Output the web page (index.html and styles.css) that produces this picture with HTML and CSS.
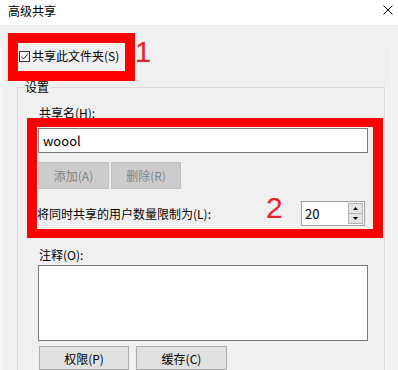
FILE: index.html
```html
<!DOCTYPE html>
<html lang="zh-CN">
<head>
<meta charset="utf-8">
<title>高级共享</title>
<link rel="stylesheet" href="styles.css">
</head>
<body>
<div class="dialog">
  <div class="titlebar">
    <span class="title">高级共享</span>
    <svg class="close" width="10" height="10" viewBox="0 0 10 10"><path d="M0.5 0.5 L9.5 9.5 M9.5 0.5 L0.5 9.5" stroke="#111" stroke-width="1" fill="none"/></svg>
  </div>
  <div class="body">
    <div class="share-row">
      <span class="checkbox"><svg width="9" height="9" viewBox="0 0 9 9"><path d="M1 4.5 L3.5 7 L8 1.5" stroke="#222" stroke-width="1" fill="none"/></svg></span>
      <span class="label">共享此文件夹(S)</span>
    </div>
    <fieldset class="group">
      <legend class="legend">设置</legend>
      <div class="label name-label">共享名(H):</div>
      <div class="textbox">woool</div>
      <div class="btn-row">
        <span class="btn disabled w71">添加(A)</span>
        <span class="btn disabled w70">删除(R)</span>
      </div>
      <div class="limit-row">
        <span class="label">将同时共享的用户数量限制为(L):</span>
        <span class="spin">
          <span class="spin-value">20</span>
          <span class="spin-btns">
            <span class="spin-btn"><svg width="5" height="3" viewBox="0 0 5 3"><path d="M0 3 L2.5 0 L5 3 Z" fill="#000"/></svg></span>
            <span class="spin-btn"><svg width="5" height="3" viewBox="0 0 5 3"><path d="M0 0 L2.5 3 L5 0 Z" fill="#000"/></svg></span>
          </span>
        </span>
      </div>
      <div class="label note-label">注释(O):</div>
      <div class="textarea"></div>
      <div class="btn-row bottom">
        <span class="btn normal w90">权限(P)</span>
        <span class="btn normal w91">缓存(C)</span>
      </div>
    </fieldset>
  </div>
  <div class="mark mark1"></div>
  <div class="num num1">1</div>
  <div class="mark mark2"></div>
  <div class="num num2">2</div>
</div>
</body>
</html>
```
FILE: styles.css
```css
html, body {
  margin: 0;
  padding: 0;
  background: #f0f0f0;
}
.dialog {
  position: relative;
  width: 398px;
  height: 370px;
  overflow: hidden;
  background: #f0f0f0;
  font-family: "Noto Sans CJK SC", "Liberation Sans", sans-serif;
  font-size: 12px;
  color: #000;
}
.titlebar {
  height: 25px;
  background: #fff;
  display: flex;
  align-items: center;
  justify-content: space-between;
  padding: 0 5px 4px 8px;
  box-sizing: border-box;
}
.title {
  line-height: 16px;
}
.close {
  display: block;
  margin-top: -1px;
}
.body {
  height: 345px;
  border-left: 3px solid #f6f6f6;
  border-right: 1px solid #f6f6f6;
  margin-right: 6px;
  box-sizing: border-box;
}
.share-row {
  display: flex;
  align-items: center;
  margin: 23px 0 0 16px;
  height: 16px;
}
.checkbox {
  width: 11px;
  height: 11px;
  border: 1px solid #333;
  box-sizing: border-box;
  background: #fff;
  display: flex;
  align-items: center;
  justify-content: center;
  margin-right: 2px;
}
.checkbox svg { display: block; }
.label {
  line-height: 16px;
  white-space: nowrap;
}
.group {
  margin: 15px 0 0 14px;
  width: 368px;
  box-sizing: border-box;
  border: 1px solid #dcdcdc;
  padding: 0 0 0 20px;
  min-width: 0;
}
.legend {
  line-height: 16px;
  padding: 0 1px;
  margin-left: -14px;
}
.name-label {
  margin-top: 10px;
  padding-left: 1px;
}
.textbox {
  margin-top: 7px;
  width: 330px;
  height: 25px;
  box-sizing: border-box;
  border: 1px solid #7a7a7a;
  background: #fff;
  line-height: 23px;
  padding-left: 4px;
  font-size: 13px;
}
.btn-row {
  display: flex;
  gap: 2px;
  margin-top: 9px;
}
.btn {
  display: flex;
  align-items: center;
  justify-content: center;
  box-sizing: border-box;
}
.btn.disabled {
  height: 27px;
  background: #cccccc;
  border: 1px solid #bfbfbf;
  color: #838383;
}
.btn.normal {
  height: 24px;
  background: #e1e1e1;
  border: 1px solid #adadad;
}
.w70 { width: 70px; }
.w71 { width: 71px; }
.w90 { width: 90px; }
.w91 { width: 91px; }
.btn-row.bottom {
  gap: 7px;
  margin-top: 5px;
  padding-left: 1px;
}
.limit-row {
  margin-top: 12px;
  width: 328px;
  margin-left: -1px;
  display: flex;
  align-items: center;
  justify-content: space-between;
}
.spin {
  width: 64px;
  height: 25px;
  box-sizing: border-box;
  border: 1px solid #a0a0a0;
  background: #fff;
  display: flex;
  justify-content: space-between;
  padding: 1px;
}
.spin-value {
  line-height: 22px;
  padding-left: 2px;
  font-size: 13px;
}
.spin-btns {
  display: flex;
  flex-direction: column;
  width: 15px;
}
.spin-btn {
  flex: 1;
  background: #e5e5e5;
  border: 1px solid #b5b5b5;
  display: flex;
  align-items: center;
  justify-content: center;
}
.spin-btn + .spin-btn { border-top: 0; }
.spin-btn svg { display: block; }
.note-label {
  margin-top: 21px;
  padding-left: 1px;
}
.textarea {
  margin-top: 2px;
  width: 330px;
  height: 76px;
  box-sizing: border-box;
  border: 1px solid #7a7a7a;
  background: #fff;
}
.mark {
  position: absolute;
  box-sizing: border-box;
  border: 10px solid #ff0000;
}
.mark1 {
  left: 8px;
  top: 33px;
  width: 127px;
  height: 48px;
}
.mark2 {
  left: 27px;
  top: 118px;
  width: 356px;
  height: 120px;
  border-width: 9px 10px;
}
.num {
  position: absolute;
  font-family: "Liberation Sans", sans-serif;
  color: #e8212b;
  line-height: 1;
}
.num1 {
  left: 135px;
  top: 38px;
  font-size: 29px;
}
.num2 {
  left: 266px;
  top: 193px;
  font-size: 30px;
}
```
